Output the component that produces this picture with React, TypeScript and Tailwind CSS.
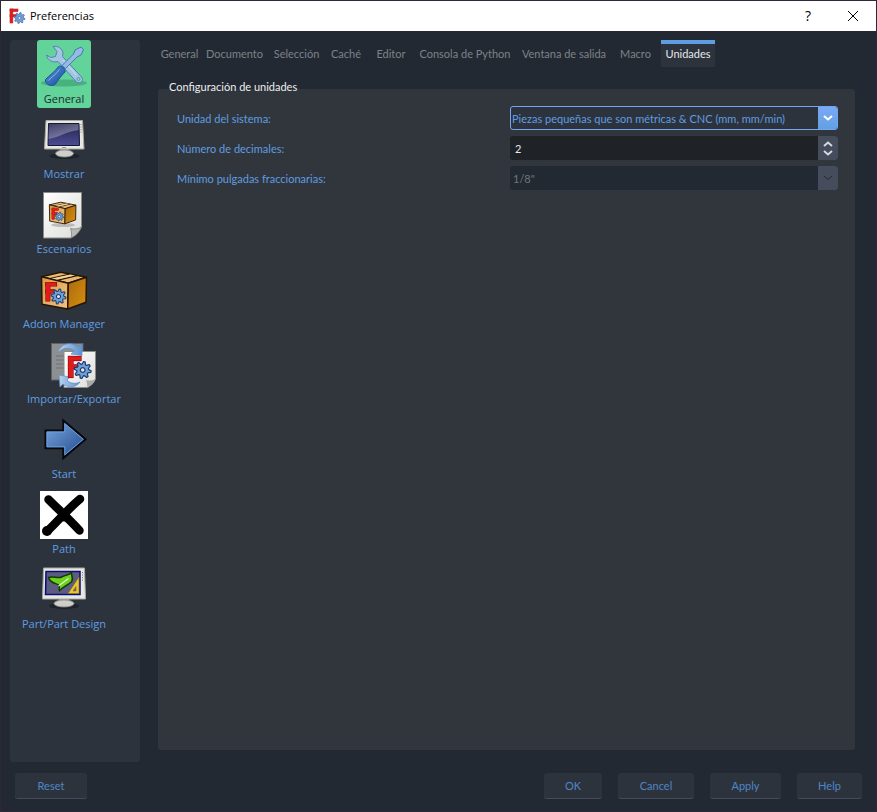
import type { ReactNode } from "react";

const teeth = 8;
const gearPoints = Array.from({ length: teeth * 4 }, (_, i) => {
  const r = i % 4 < 2 ? 10 : 7;
  const a = ((i + 0.5) / (teeth * 4)) * Math.PI * 2;
  return `${(Math.cos(a) * r).toFixed(2)},${(Math.sin(a) * r).toFixed(2)}`;
}).join(" ");

function Gear({ x, y, size, edge = "#1c3c6e" }: { x: number; y: number; size: number; edge?: string }) {
  return (
    <g transform={`translate(${x} ${y}) scale(${size / 10})`} strokeLinejoin="round">
      <polygon points={gearPoints} fill="#6f9fd8" stroke={edge} strokeWidth="1.4" />
      <circle r="2.8" fill="#e3e6ea" stroke={edge} strokeWidth="1.4" />
    </g>
  );
}

/* Red bracket mark of the application logo, drawn from three bars. */
function Mark({ x, y, w, h, edge = 1.2 }: { x: number; y: number; w: number; h: number; edge?: number }) {
  const t = w * 0.36;
  const bars = [
    [x, y, t, h],
    [x, y, w, t * 0.9],
    [x, y + h * 0.4, w * 0.8, t * 0.8],
  ];
  return (
    <g>
      {bars.map((b, i) => (
        <rect key={i} x={b[0]} y={b[1]} width={b[2]} height={b[3]} fill="none" stroke="#7d0808" strokeWidth={edge} />
      ))}
      {bars.map((b, i) => (
        <rect key={i} x={b[0]} y={b[1]} width={b[2]} height={b[3]} fill="#e3191d" stroke="none" />
      ))}
    </g>
  );
}

function Box() {
  return (
    <g stroke="#241603" strokeWidth="1.5" strokeLinejoin="round">
      <path d="M1.5 10.7 20.7 6.3 46.5 11.3 28.3 17.3Z" fill="#e9b872" />
      <path d="M1.5 10.7 28.3 17.3 27.7 43 2 38.3Z" fill="url(#boxFront)" />
      <path d="M28.3 17.3 46.5 11.3 46 36.3 27.7 43Z" fill="url(#boxSide)" />
      <path d="M10 12.6 30 8.2M17 14.3 37 9.6" strokeWidth="1.2" />
      <path d="M11.5 12.4 30.5 8.6 35 9.5 17 13.6Z" fill="#f4d09a" stroke="none" />
      <Mark x={6} y={16.5} w={10.5} h={18.5} />
      <Gear x={18.5} y={30.5} size={7.5} />
    </g>
  );
}

function Icon({ children }: { children: ReactNode }) {
  return (
    <svg viewBox="0 0 48 48" className="size-12 shrink-0" aria-hidden="true">
      {children}
    </svg>
  );
}

function Defs() {
  return (
    <svg className="absolute size-0" aria-hidden="true">
      <defs>
        <linearGradient id="boxFront" x1="0" y1="0" x2="1" y2="1">
          <stop offset="0" stopColor="#d99a3e" />
          <stop offset="1" stopColor="#f0c486" />
        </linearGradient>
        <linearGradient id="boxSide" x1="0" y1="0" x2="1" y2="1">
          <stop offset="0" stopColor="#a86a08" />
          <stop offset="1" stopColor="#d98f14" />
        </linearGradient>
        <linearGradient id="screen" x1="0" y1="0" x2="0" y2="1">
          <stop offset="0" stopColor="#23234f" />
          <stop offset="1" stopColor="#4d4c92" />
        </linearGradient>
        <linearGradient id="glare" x1="0" y1="0" x2="1" y2="1">
          <stop offset="0" stopColor="#fff" stopOpacity="0.12" />
          <stop offset="1" stopColor="#fff" stopOpacity="0.4" />
        </linearGradient>
        <linearGradient id="paper" x1="0" y1="0" x2="1" y2="1">
          <stop offset="0" stopColor="#ffffff" />
          <stop offset="1" stopColor="#dcdcda" />
        </linearGradient>
        <linearGradient id="arrow" x1="0" y1="0" x2="1" y2="1">
          <stop offset="0" stopColor="#7aabe2" />
          <stop offset="1" stopColor="#1f4488" />
        </linearGradient>
        <linearGradient id="handle" x1="0" y1="0" x2="1" y2="1">
          <stop offset="0" stopColor="#5b98de" />
          <stop offset="1" stopColor="#174a96" />
        </linearGradient>
        <linearGradient id="swirl" x1="0" y1="0" x2="1" y2="0">
          <stop offset="0" stopColor="#b9d3ee" />
          <stop offset="1" stopColor="#5d93d2" />
        </linearGradient>
      </defs>
    </svg>
  );
}

function ToolsIcon() {
  return (
    <Icon>
      <ellipse cx="24" cy="42" rx="23" ry="3.5" fill="#2b8a60" opacity="0.45" />
      <path
        d="M13 5.5C18 4.5 22.5 7.5 23 12L22.500 15.500 41.500 36C44.500 39.500 40 43.500 36.500 41L18 20.500C13 22 7.500 19.500 6.500 14L10.500 16.500 15.500 15.500 17 10.500Z"
        fill="#a3c4e2"
        stroke="#5482b4"
        strokeWidth="1"
        strokeLinejoin="round"
      />
      <path d="M23 19 36.500 34" stroke="#bcd5ec" strokeWidth="1.500" />
      <circle cx="38.5" cy="38" r="1.500" fill="#8fd8c0" stroke="#5482b4" strokeWidth="0.800" />
      <path
        d="M22 24.500 33.500 13 35 9 41 6 43.500 8.500 41 14 37 16 25.500 27.500Z"
        fill="#94bbe4"
        stroke="#4878b0"
        strokeWidth="1"
        strokeLinejoin="round"
      />
      <path
        d="M18.500 25.500C21 24 26 27.500 25 31 22 34 18 39 15.500 43 12 46.500 4.500 43.500 5.500 38.500 9 34.500 15 31 18.500 25.500Z"
        fill="url(#handle)"
        stroke="#1b52a0"
        strokeWidth="1"
      />
      <path d="M19.500 28.500C16.500 33 11.500 36 8.500 39.500" stroke="#85b4ec" strokeWidth="1" fill="none" />
    </Icon>
  );
}

function MonitorIcon() {
  return (
    <Icon>
      <ellipse cx="24.5" cy="40" rx="15" ry="3" fill="#14181e" opacity="0.6" />
      <path d="M20 33H29L30 36H19Z" fill="#8f8f8a" />
      <ellipse cx="24.5" cy="37.5" rx="9" ry="3.500" fill="#cfcfca" stroke="#8d8d88" strokeWidth="0.8" />
      <path d="M6 4.500H42.500L44 33H4.500Z" fill="#e8e8e2" stroke="#a8a8a2" strokeWidth="1" strokeLinejoin="round" />
      <path d="M8.500 7.500H39L39.500 29.500H8Z" fill="url(#screen)" stroke="#161638" strokeWidth="1" />
      <path d="M9 8H38.500V14C27 15 18 22 8.500 23Z" fill="url(#glare)" />
      <path d="M41 8V17" stroke="#777" strokeWidth="1" strokeDasharray="1 1.500" />
      <path d="M22 31.500H26" stroke="#999" strokeWidth="1" />
    </Icon>
  );
}

function TemplateIcon() {
  return (
    <Icon>
      <path d="M3.500 1.500H41.500V36L31 47H3.500Z" fill="url(#paper)" stroke="#8a8a86" strokeWidth="1" />
      <path d="M31 47C32 44 31.500 40 30.500 37.500 34 38.500 39 38 41.500 36 40 40 36 45 31 47Z" fill="#b9b9b6" stroke="#80807c" strokeWidth="0.800" />
      <ellipse cx="23" cy="34" rx="12" ry="2" fill="#777" opacity="0.4" />
      <g transform="translate(8.500 7.500) scale(0.590)">
        <Box />
      </g>
    </Icon>
  );
}

function AddonIcon() {
  return (
    <Icon>
      <Box />
    </Icon>
  );
}

function TransferIcon() {
  return (
    <Icon>
      <rect x="1.500" y="2.500" width="31.500" height="36.500" fill="#8d9092" stroke="#5f6265" />
      <path d="M6 15H14M6 19H14M6 23H14M6 27H14" stroke="#6d7073" strokeWidth="1.200" />
      <path d="M14 10.500H45.500V38L38 46.500H14Z" fill="url(#paper)" stroke="#8a8a86" strokeWidth="1" />
      <path d="M37 46.500C37.500 43.500 37 41 36 39 40 40 43 39.500 45.500 38 45 41 42 45 37 46.500Z" fill="#a9aaa7" />
      <path d="M8 12C10 2 22 0 27.500 6L32 3 32 14.500 21 13 24.500 10C19 5.500 12 7 8 12Z" fill="url(#swirl)" stroke="#5b8dc8" strokeWidth="0.700" />
      <path d="M9 34 19.500 36 17 39C20 43 26 43 30 41 26 47 18 47 13 43L10 46Z" fill="url(#swirl)" stroke="#5b8dc8" strokeWidth="0.700" />
      <Mark x={18.5} y={15.5} w={12.500} h={21} />
      <Gear x={32.7} y={29} size={8.500} />
    </Icon>
  );
}

function StartIcon() {
  return (
    <Icon>
      <path d="M5.500 14.500H23.300V4.500L45.500 23.300 23.300 42V32.300H5.500Z" fill="url(#arrow)" stroke="#05070a" strokeWidth="2" />
      <path d="M7 16H24.800V7.700L43.300 23.300 24.800 38.800V30.800H7Z" fill="none" stroke="#6a9ddb" strokeWidth="1" />
    </Icon>
  );
}

function PathIcon() {
  return (
    <Icon>
      <rect width="48" height="48" fill="#fff" />
      <path d="M8.500 8.500C18 18 29 28 39.500 39.500M40 8C28 18 18 30 7.500 40" fill="none" stroke="#000" strokeWidth="8.500" strokeLinecap="round" />
      <path d="M24 18 30 24 24 31 18 24Z" />
      <circle cx="7" cy="40" r="5" />
    </Icon>
  );
}

function PartIcon() {
  return (
    <Icon>
      <ellipse cx="24" cy="40" rx="15" ry="3" fill="#14181e" opacity="0.6" />
      <path d="M19 33H29L30 36H18Z" fill="#8f8f8a" />
      <ellipse cx="24" cy="37.500" rx="10" ry="3.500" fill="#cfcfca" stroke="#8d8d88" strokeWidth="0.800" />
      <path d="M3.500 2H44.500L45.500 33H2.500Z" fill="#e8e8e2" stroke="#a8a8a2" strokeWidth="1" strokeLinejoin="round" />
      <path d="M6 5.500H40V28.500H5.500Z" fill="#5b5c80" stroke="#0c0c78" strokeWidth="1.500" />
      <path
        d="M8.500 11.500C14 9.500 17 13 21.500 11 26 9 29 9 31.500 6.500 31 10 34 13 31.500 15.700 28 19 23 21 19.500 24.700 18 22 21 20.500 18.500 18.800 15 17 10 17 8.500 11.500Z"
        fill="#6cd01d"
        stroke="#123a04"
        strokeWidth="1.500"
      />
      <path d="M18.500 20 28.500 12.500" stroke="#e2f7c7" strokeWidth="1.200" />
      <path d="M39 11V27.500H28ZM36 20.500 33 25H36Z" fill="#eac53a" fillRule="evenodd" stroke="#8a6d08" strokeWidth="0.600" />
      <path d="M42.500 6V15" stroke="#777" strokeWidth="1" strokeDasharray="1 1.500" />
    </Icon>
  );
}

const pages = [
  { label: "General", icon: <ToolsIcon />, active: true },
  { label: "Mostrar", icon: <MonitorIcon /> },
  { label: "Escenarios", icon: <TemplateIcon /> },
  { label: "Addon Manager", icon: <AddonIcon /> },
  { label: "Importar/Exportar", icon: <TransferIcon />, wide: true },
  { label: "Start", icon: <StartIcon /> },
  { label: "Path", icon: <PathIcon /> },
  { label: "Part/Part Design", icon: <PartIcon /> },
];

const tabs = [
  { label: "General", width: "w-[43px]" },
  { label: "Documento", width: "w-[67px]" },
  { label: "Selección", width: "w-[57px]" },
  { label: "Caché", width: "w-[42px]" },
  { label: "Editor", width: "w-[48px]" },
  { label: "Consola de Python", width: "w-[100px]" },
  { label: "Ventana de salida", width: "w-[98px]" },
  { label: "Macro", width: "w-[45px]" },
];

function Chevron({ up = false, className }: { up?: boolean; className: string }) {
  return (
    <svg viewBox="0 0 10 6" className={className} fill="none" stroke="currentColor" aria-hidden="true">
      <path d={up ? "M1 5 5 1.500 9 5" : "M1 1 5 4.500 9 1"} />
    </svg>
  );
}

function DialogButton({ label, width }: { label: string; width: string }) {
  return (
    <button
      type="button"
      className={`${width} h-[26px] rounded-[3px] border-b border-[#454b5c] bg-[#2d333d] pt-px text-center text-[#4f86c6]`}
    >
      {label}
    </button>
  );
}

export default function App() {
  return (
    <div className="flex min-h-screen flex-col border border-[#30283a] bg-[#232932] font-['Lato',sans-serif] text-[11px] text-[#5f9de0]">
      <Defs />
      <header className="flex h-[30px] items-center bg-white pl-2 font-['Open_Sans',sans-serif] text-black">
        <svg viewBox="0 0 17 17" className="size-[17px]" aria-hidden="true">
          <Mark x={1} y={1} w={8} h={14} edge={0.5} />
          <Gear x={10.500} y={10} size={5.500} edge="#4a6fa5" />
        </svg>
        <h1 className="ml-1 flex-1">Preferencias</h1>
        <button type="button" aria-label="Ayuda" className="h-full w-11 text-sm">
          ?
        </button>
        <button type="button" aria-label="Cerrar" className="flex h-full w-[46px] items-center justify-center">
          <svg viewBox="0 0 12 12" className="size-3" stroke="#000" aria-hidden="true">
            <path d="M1 1 11 11M11 1 1 11" />
          </svg>
        </button>
      </header>

      <div className="flex flex-1 pt-[9px]">
        <nav className="ml-[9px] flex w-[130px] shrink-0 flex-col items-start gap-[7px] rounded-[3px] bg-[#2d333d] font-['Open_Sans',sans-serif]">
          {pages.map((p) => (
            <div key={p.label} className={`flex justify-center ${p.wide ? "w-[128px]" : "w-[108px]"}`}>
              <button
                type="button"
                className={`flex h-[68px] flex-col items-center rounded-[3px] pt-px ${
                  p.active ? "w-[54px] bg-[#62d399] text-[#232932]" : ""
                }`}
              >
                {p.icon}
                <span className="leading-5 whitespace-nowrap">{p.label}</span>
              </button>
            </div>
          ))}
        </nav>

        <main className="mr-[21px] ml-[18px] flex min-w-0 flex-1 flex-col pb-3">
          <div role="tablist" className="flex h-[27px] items-stretch whitespace-nowrap">
            {tabs.map((t) => (
              <button key={t.label} type="button" role="tab" className={`${t.width} flex items-center justify-center pt-0.5 text-[#7d8289]`}>
                {t.label}
              </button>
            ))}
            <button
              type="button"
              role="tab"
              aria-selected="true"
              className="ml-[3px] flex w-[54px] items-center justify-center border-t-4 border-[#5f9de0] bg-[#2d333d] pb-0.5 text-[#e6e8ec]"
            >
              Unidades
            </button>
          </div>

          <fieldset className="mt-3 flex-1 rounded-[3px] bg-[#31363d]">
            <legend className="ml-[11px] pb-1 leading-4 text-[#eceef0]">Configuración de unidades</legend>
            <div className="mt-[7px] mr-[17px] ml-[19px] grid grid-cols-[333px_1fr] items-center gap-y-[6px]">
              <label htmlFor="system" className="pt-0.5">Unidad del sistema:</label>
              <div className="flex h-6 overflow-hidden rounded-[3px] border border-[#74a5f2] bg-[#2d333d]">
                <select id="system" className="min-w-0 flex-1 appearance-none bg-transparent pt-0.5 pl-px outline-none">
                  <option>Piezas pequeñas que son métricas &amp; CNC (mm, mm/min)</option>
                </select>
                <span className="flex w-[19px] items-center justify-center bg-linear-to-b from-[#7ba9f5] to-[#62a0e3] text-white">
                  <Chevron className="h-[6px] w-[10px] stroke-2" />
                </span>
              </div>

              <label htmlFor="decimals" className="pt-0.5">Número de decimales:</label>
              <div className="flex h-6 overflow-hidden rounded-[3px] bg-[#1f2226]">
                <input id="decimals" defaultValue="2" className="min-w-0 flex-1 bg-transparent pt-0.5 pl-[5px] text-[#e6e8ec] outline-none" />
                <div className="flex w-5 flex-col bg-[#454c5b] text-[#d5d8de]">
                  <button type="button" aria-label="Aumentar" className="flex flex-1 items-center justify-center pt-[3px]">
                    <Chevron up className="h-[6px] w-[10px] stroke-2" />
                  </button>
                  <button type="button" aria-label="Disminuir" className="flex flex-1 items-center justify-center pb-[3px]">
                    <Chevron className="h-[6px] w-[10px] stroke-2" />
                  </button>
                </div>
              </div>

              <label htmlFor="fraction" className="pt-0.5">Mínimo pulgadas fraccionarias:</label>
              <div className="flex h-6 overflow-hidden rounded-[3px] bg-[#232932]">
                <select id="fraction" disabled className="min-w-0 flex-1 appearance-none bg-transparent pt-0.5 pl-[3px] text-[#71757b] opacity-100">
                  <option>1/8"</option>
                </select>
                <span className="flex w-5 items-center justify-center bg-[#454c5b] text-[#262b33]">
                  <Chevron className="h-[6px] w-[10px]" />
                </span>
              </div>
            </div>
          </fieldset>
        </main>
      </div>

      <footer className="flex gap-4 pt-[11px] pr-[14px] pb-3 pl-[14px]">
        <DialogButton label="Reset" width="w-[72px]" />
        <div className="flex-1" />
        <DialogButton label="OK" width="w-[58px]" />
        <DialogButton label="Cancel" width="w-[76px]" />
        <DialogButton label="Apply" width="w-[71px]" />
        <DialogButton label="Help" width="w-[65px]" />
      </footer>
    </div>
  );
}
